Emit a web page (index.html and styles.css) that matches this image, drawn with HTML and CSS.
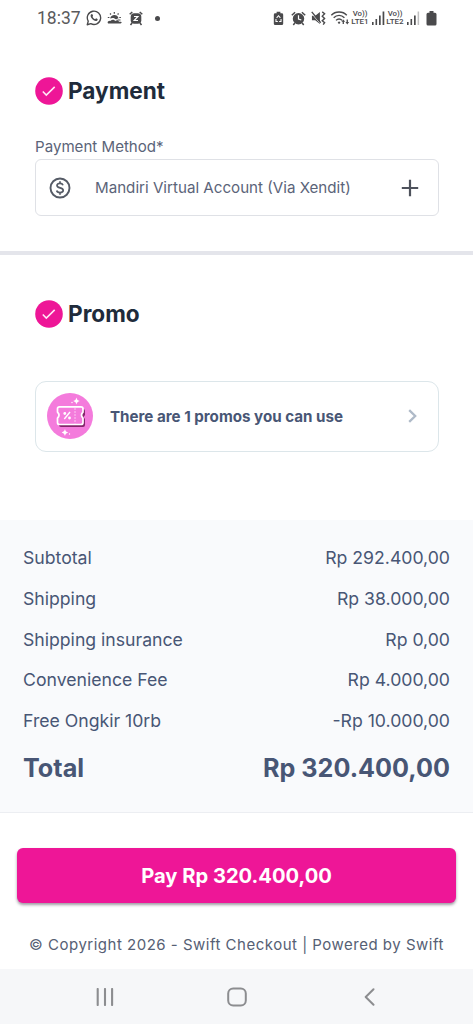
FILE: index.html
```html
<!DOCTYPE html>
<html lang="en">
<head>
<meta charset="utf-8">
<meta name="viewport" content="width=device-width">
<title>Swift Checkout</title>
<link rel="stylesheet" href="styles.css">
</head>
<body>
<header class="status">
  <div class="status-group">
    <span class="clock">18:37</span>
    <svg class="whatsapp" width="16" height="16" viewBox="0 0 18 18" fill="none" stroke="currentColor"><path stroke-width="1.500" stroke-linejoin="round" d="M1.400 16.600l1.100-4A7.500 7.500 0 1 1 5.400 15.400z"/><path fill="currentColor" stroke="none" d="M5.600 5.200c.8-1 1.500-.9 1.800-.1l.5 1.300c.1.500-.7 1-.6 1.300.7 1.300 1.500 2 2.900 2.600.4.100.8-1 1.200-.9l1.500.7c.6.300.1 1.600-.6 2-2.900 1.500-8.700-3.800-6.700-6.900z"/></svg>
    <svg class="weather" width="15" height="14" viewBox="0 0 15 14" fill="currentColor"><path d="M3.200 7.500C3.500 2.800 11 2.800 11.500 7.300c-.8.500-1.700.4-2.300 1.300C7.500 6.800 5.500 6.500 3.200 7.500zM1.200 12.500c-1.500-1 .2-3 2.300-2.600C5 8 7.300 8.500 8.200 10c1.800-1.500 3.500-.5 3.800.7h1.500c1.500 0 1.500 1.800 0 1.800z"/><path d="M7.300 1v1.800M3 2.500l1 1M11.600 2.500l-1 1M.8 6.500h1.600M12.300 6.500h1.600M10.500 9h3" stroke="currentColor" stroke-width="1.200"/></svg>
    <svg class="alarm-z" width="14" height="15" viewBox="0 0 14 15"><rect x="1.700" y="2.200" width="10.600" height="10.600" rx="3.500" fill="currentColor"/><path fill="none" stroke="currentColor" stroke-width="1.500" d="M.7 3.300L3.300 1M13.300 3.300L10.700 1M3 12l-1.500 2M11 12l1.500 2"/><path fill="none" stroke="#fff" stroke-width="1.200" d="M5 5.500h3.900L5.200 9.500H9"/></svg>
    <span class="dot"></span>
  </div>
  <div class="status-group">
    <svg width="11" height="15" viewBox="0 0 11 16"><path fill="currentColor" d="M3.500.8h4V2.500H9A1.500 1.500 0 0 1 10.500 4v9.500A1.500 1.500 0 0 1 9 15H2A1.500 1.500 0 0 1 .5 13.500V4A1.500 1.500 0 0 1 2 2.500h1.500z"/><path fill="none" stroke="#fff" stroke-width="1.100" d="M3.500 7.300l2-2.300 2 2.300M2.800 8.500v2.700h2M8.200 8.500v2.700h-2"/></svg>
    <svg class="alarm" width="15" height="15" viewBox="0 0 15 15"><circle cx="7.500" cy="7.800" r="5.700" fill="currentColor"/><path fill="none" stroke="currentColor" stroke-width="1.500" d="M.8 4.300l3.300-3.100M14.200 4.300l-3.300-3.100M3.800 12l-1.500 2M11.200 12l1.500 2"/><path fill="none" stroke="#fff" stroke-width="1.200" d="M7.500 4.300V8l2.800 1"/></svg>
    <svg class="mute" width="15" height="16" viewBox="0 0 16 17"><path fill="currentColor" d="M1 6h3.500L9.500 2v13l-5-4H1z"/><path fill="none" stroke="#fff" stroke-width="1" d="M.5 3.500l9.500 11"/><path fill="none" stroke="currentColor" stroke-width="1.500" d="M.8 2l9.500 11.500M12 2l2.500 2L12 6.500 14.500 9 12 11.500l2.500 2-1.500 2"/></svg>
    <svg class="wifi" width="20" height="16" viewBox="0 0 20 17" fill="none" stroke="currentColor"><path stroke-width="1.500" d="M.8 5.500C5 1 13 1 17.200 5.500M3.300 8.300c3.300-3.500 8.100-3.500 11.400 0M5.800 11c1.800-2 4.600-2 6.400 0"/><path fill="currentColor" stroke="none" d="M9 12l1.500 1.500L9 15l-1.500-1.500zM11.500 12.500l2-2.500 2 2.500h-1.300V15h-1.400v-2.500zM15.800 12.800H17V10h1.400v2.800h1.300l-2 2.500z"/></svg>
    <span class="volte"><span>Vo))</span><span class="lte">LTE1</span></span>
    <svg class="signal" width="14" height="14" viewBox="0 0 14 14" fill="currentColor"><path d="M1 11h1.600v3H1zM4.500 8h1.600v6H4.500zM8 4.500h1.700V14H8zM11.600.5h1.700V14h-1.700z"/></svg>
    <span class="volte"><span>Vo))</span><span class="lte">LTE2</span></span>
    <svg class="signal" width="14" height="14" viewBox="0 0 14 14" fill="currentColor"><path d="M1 11h1.600v3H1zM4.500 8h1.600v6H4.500zM8 4.500h1.700V14H8z"/><path opacity=".35" d="M11.600.5h1.500V14h-1.500z"/></svg>
    <svg class="battery" width="11" height="15" viewBox="0 0 11 15"><path fill="currentColor" d="M3.500 0h4v1.700H9a1.500 1.500 0 0 1 1.500 1.500v9.800A1.500 1.500 0 0 1 9 14.500H2A1.500 1.500 0 0 1 .5 13V3.200A1.500 1.500 0 0 1 2 1.700h1.500z"/></svg>
  </div>
</header>
<main>
  <section class="payment">
    <h2 class="heading"><svg width="28" height="28" viewBox="0 0 28 28"><circle cx="14" cy="14" r="13.800" fill="#ee1697"/><path d="M7.800 14.500l3.500 3.600 8.400-8.200" fill="none" stroke="#ffe6f6" stroke-width="1.600"/></svg><span class="heading-text">Payment</span></h2>
    <div class="label"><span class="label-text">Payment Method*</span></div>
    <div class="field">
      <svg width="22" height="22" viewBox="0 0 22 22" fill="none" stroke="#555b66"><circle cx="11" cy="11" r="9.500" stroke-width="1.900"/><path stroke-width="1.700" d="M14 8.200C13.500 6.900 12.300 6.400 11 6.400c-1.800 0-3 .8-3 2.200 0 3.200 6.200 1.500 6.200 4.700 0 1.500-1.300 2.300-3.200 2.300-1.700 0-3-.7-3.300-2.100M11 4.200v2.500M11 15.300v2.500"/></svg>
      <span class="method">Mandiri Virtual Account (Via Xendit)</span>
      <svg class="plus" width="18" height="18" viewBox="0 0 18 18"><path d="M9 .8v16.400M.8 9h16.400" stroke="#4e525c" stroke-width="2.200"/></svg>
    </div>
  </section>
  <section class="promo">
    <h2 class="heading"><svg width="28" height="28" viewBox="0 0 28 28"><circle cx="14" cy="14" r="13.800" fill="#ee1697"/><path d="M7.800 14.500l3.500 3.600 8.400-8.200" fill="none" stroke="#ffe6f6" stroke-width="1.600"/></svg><span class="heading-text">Promo</span></h2>
    <div class="promo-card">
      <svg width="46" height="46" viewBox="0 0 46 46"><circle cx="23" cy="23" r="23" fill="#f47bdc"/><path fill="#85266c" d="M14 16h22q2 0 2 2v4l-1.500 2 1.500 2v6q0 2-2 2H14q-2 0-2-2z"/><path fill="#f47bdc" stroke="#fff" stroke-width="1.700" stroke-linejoin="round" d="M12.500 13.800h21.500q2 0 2 2v3.400q-3 3 0 6v4.300q0 2-2 2H12.500q-2 0-2-2v-4.300q3-3 0-6v-3.400q0-2 2-2z"/><path d="M28 15v15.500" stroke="#fbc7f0" stroke-width="1" stroke-dasharray="2 1"/><path d="M17.300 26l5.700-7" stroke="#fff" stroke-width="1.400"/><circle cx="17.800" cy="20.500" r="1.400" fill="#fff"/><circle cx="22.500" cy="25" r="1.400" fill="#fff"/><path fill="#fff" d="M29.500 4.500q.4 3 3.300 3.500-2.900.5-3.300 3.500-.4-3-3.300-3.500 2.900-.5 3.300-3.500zM18 36q.4 3 3.300 3.500-2.900.5-3.300 3.500-.4-3-3.300-3.500 2.900-.5 3.300-3.500z"/><circle cx="25" cy="9.500" r=".7" fill="#fff"/><circle cx="22.500" cy="41" r=".7" fill="#fff"/></svg>
      <span class="promo-text">There are 1 promos you can use</span>
      <svg class="chevron" width="9" height="14" viewBox="0 0 9 14"><path d="M1.200 1.200L7.200 7l-6 5.800" fill="none" stroke="#afbac8" stroke-width="2.300"/></svg>
    </div>
  </section>
  <section class="summary">
    <div class="row"><span>Subtotal</span><span>Rp 292.400,00</span></div>
    <div class="row"><span>Shipping</span><span>Rp 38.000,00</span></div>
    <div class="row"><span>Shipping insurance</span><span>Rp 0,00</span></div>
    <div class="row"><span>Convenience Fee</span><span>Rp 4.000,00</span></div>
    <div class="row"><span>Free Ongkir 10rb</span><span>-Rp 10.000,00</span></div>
    <div class="row total"><span>Total</span><span>Rp 320.400,00</span></div>
  </section>
</main>
<footer class="footer">
  <button class="pay" type="button"><span>Pay Rp 320.400,00</span></button>
  <p class="copyright"><span>© Copyright 2026 - Swift Checkout | Powered by Swift</span></p>
</footer>
<nav class="nav">
  <svg width="18" height="18" viewBox="0 0 18 18"><path d="M1.700 1v16M9 1v16M16.100 1v16" stroke="#8c8d90" stroke-width="2.100" stroke-linecap="round"/></svg>
  <svg class="home" width="20" height="20" viewBox="0 0 20 20"><rect x="1.200" y="1.400" width="17.600" height="17.200" rx="5" fill="none" stroke="#8c8d90" stroke-width="2"/></svg>
  <svg class="back" width="11" height="18" viewBox="0 0 11 18"><path d="M9.500 1.200L1.700 9l7.800 7.800" fill="none" stroke="#8c8d90" stroke-width="2" stroke-linecap="round" stroke-linejoin="round"/></svg>
</nav>
</body>
</html>
```

FILE: styles.css
```css
* { box-sizing: border-box; }
body { margin: 0; width: 473px; height: 1024px; overflow: hidden; background: #fff; color: #485675; font-family: Inter, "Liberation Sans", sans-serif; }
svg { display: block; flex: none; }
span { white-space: nowrap; }
.status { display: flex; justify-content: space-between; height: 36px; padding: 0 36px 0 37px; color: #4a4a4c; }
.status-group { display: flex; align-items: center; }
.clock { width: 49px; color: #5a5a5c; font: 17.5px/36px Roboto, sans-serif; }
.weather { margin-left: 5px; }
.alarm-z { margin-left: 7px; }
.dot { width: 5px; height: 5px; margin-left: 12px; border-radius: 50%; background: currentColor; }
.alarm { margin-left: 7px; }
.mute { margin-left: 5px; }
.wifi { margin-left: 4px; }
.volte { display: flex; flex-direction: column; align-items: center; width: 20px; font: 500 7.8px/8px Roboto, sans-serif; }
.lte { font-size: 8px; }
.signal { margin-left: 1px; }
.battery { margin-left: 6px; }
.payment { height: 219px; padding: 41px 34px 0 35px; border-bottom: 4px solid #e4e5eb; }
.heading { display: flex; align-items: center; gap: 5px; height: 28px; margin: 0; color: #202b3b; font-size: 22.6px; line-height: 28px; font-weight: 700; }
.label { height: 54px; padding-top: 30px; font-size: 15.1px; line-height: 24px; color: #5b6479; }
.field { display: flex; align-items: center; height: 57px; padding: 0 19px 0 13px; border: 1px solid #dfe1e6; border-radius: 6px; }
.method { margin-left: 24px; font-size: 15.15px; color: #5b6479; }
.plus, .chevron { margin-left: auto; }
.promo { height: 265px; padding: 45px 34px 0 35px; }
.promo-card { display: flex; align-items: center; height: 71px; margin-top: 53px; padding: 0 21px 1px 11px; border: 1px solid #dce6ea; border-radius: 11px; }
.promo-text { margin-left: 17px; font-size: 15.15px; font-weight: 700; }
.summary { height: 293px; padding: 18px 23px 0; background: #f9fafc; border-bottom: 1px solid #eceef2; }
.row { display: flex; justify-content: space-between; height: 40.8px; font-size: 17.65px; line-height: 40.8px; }
.total { height: 52px; line-height: 52px; font-size: 25.2px; font-weight: 700; }
.footer { height: 156px; padding: 35px 17px 0; }
.pay { display: block; width: 439px; height: 55px; padding: 0; border: 0; border-radius: 6px; background: #ee1697; color: #fff; box-shadow: 0 2px 3px rgba(45, 30, 50, .45); font: 700 20.15px/55px Inter, sans-serif; }
.copyright { margin: 30px 0 0; font-size: 15px; line-height: 24px; letter-spacing: .5px; text-align: center; color: #566074; }
.nav { display: flex; align-items: center; height: 55px; padding: 0 98px 0 96px; background: #f6f7f9; }
.home { margin-left: 113px; }
.back { margin-left: auto; }
```
